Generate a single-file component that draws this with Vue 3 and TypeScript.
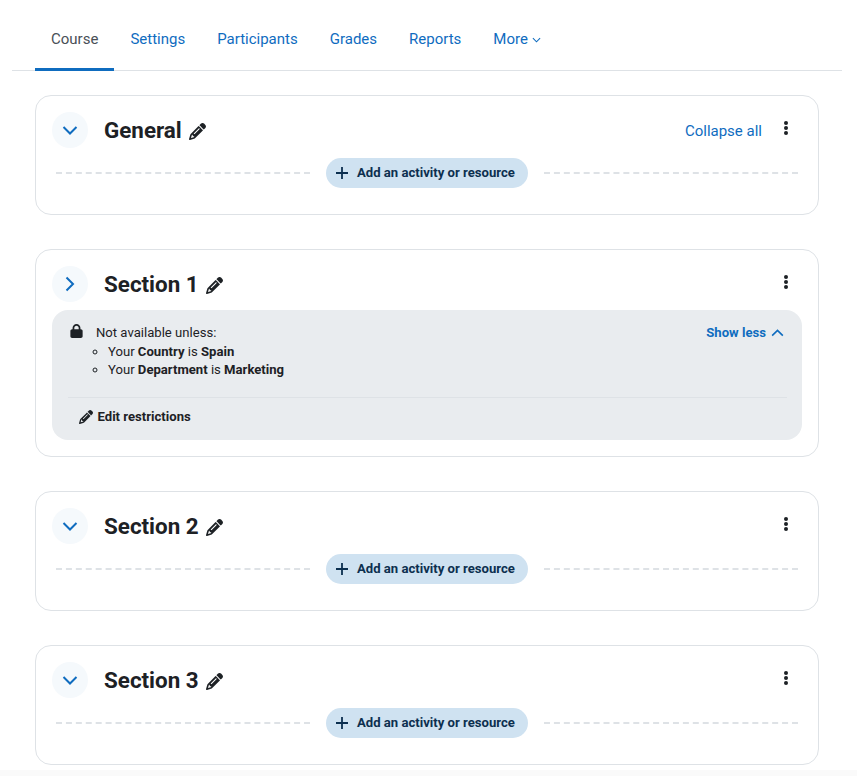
<script setup lang="ts">
const tabs: string[] = ['Settings', 'Participants', 'Grades', 'Reports']
const pencil =
  'M410.3 231l11.3-11.3-33.9-33.9-62.1-62.1L291.7 89.8l-11.3 11.3-22.6 22.6L58.6 322.9c-10.4 10.4-18 23.3-22.2 37.4L1 480.7c-2.5 8.4-.2 17.5 6.1 23.7s15.3 8.5 23.7 6.1l120.3-35.4c14.1-4.2 27-11.8 37.4-22.2L387.7 253.7 410.3 231zM160 399.4l-9.1 22.7c-4 3.1-8.5 5.4-13.3 6.9L59.4 452l23-78.1c1.4-4.9 3.8-9.4 6.9-13.3l22.7-9.1v32c0 8.8 7.2 16 16 16h32zM362.7 18.7L348.3 33.2 325.7 55.8 314.3 67.1l33.9 33.9 62.1 62.1 33.9 33.9 11.3-11.3 22.6-22.6 14.5-14.5c25-25 25-65.5 0-90.5L453.3 18.7c-25-25-65.5-25-90.5 0zm-47.4 168l-144 144c-6.2 6.2-16.4 6.2-22.6 0s-6.2-16.4 0-22.6l144-144c6.2-6.2 16.4-6.2 22.6 0s6.2 16.4 0 22.6z'
const lock =
  'M144 144v48H304V144c0-44.2-35.8-80-80-80s-80 35.8-80 80zM80 192V144C80 64.5 144.5 0 224 0s144 64.5 144 144v48h16c35.3 0 64 28.7 64 64V448c0 35.3-28.7 64-64 64H64c-35.3 0-64-28.7-64-64V256c0-35.3 28.7-64 64-64H80z'

interface Section {
  title: string
  collapseAll?: boolean
  restricted?: boolean
}
const sections: Section[] = [
  { title: 'General', collapseAll: true },
  { title: 'Section 1', restricted: true },
  { title: 'Section 2' },
  { title: 'Section 3' },
]
</script>

<template>
  <div class="page">
    <nav class="tabs">
      <a class="tab active">Course</a>
      <a v-for="t in tabs" :key="t" class="tab">{{ t }}</a>
      <a class="tab more">More<svg class="more-chevron" viewBox="0 0 10 6" width="9" height="6">
          <path d="M1 1l4 4 4-4" fill="none" stroke="currentColor" stroke-width="1.200" />
        </svg></a>
    </nav>

    <main class="sections">
      <section v-for="s in sections" :key="s.title" class="card">
        <header class="card-head">
          <span class="toggle">
            <svg v-if="s.restricted" viewBox="0 0 10 16" width="10" height="16">
              <path d="M1.500 1.500L8 8l-6.500 6.500" fill="none" stroke="currentColor" stroke-width="2" />
            </svg>
            <svg v-else viewBox="0 0 16 10" width="16" height="10">
              <path d="M1.500 2L8 8.500 14.500 2" fill="none" stroke="currentColor" stroke-width="2" />
            </svg>
          </span>
          <h2 class="title">{{ s.title }}</h2>
          <svg class="pencil" viewBox="0 0 512 512" width="17" height="17"><path :d="pencil" /></svg>
          <a v-if="s.collapseAll" class="collapse">Collapse all</a>
          <span class="dots" :class="{ 'dots-alone': !s.collapseAll }"><i></i><i></i><i></i></span>
        </header>

        <div v-if="s.restricted" class="restriction">
          <div class="r-top">
            <svg class="lock" viewBox="0 0 448 512" width="13" height="14"><path :d="lock" /></svg>
            <div class="r-text">
              <div>Not available unless:</div>
              <ul>
                <li>Your <b>Country</b> is <b>Spain</b></li>
                <li>Your <b>Department</b> is <b>Marketing</b></li>
              </ul>
            </div>
            <a class="show-less">
              Show less
              <svg viewBox="0 0 14 9" width="13" height="8">
                <path d="M1 7.500l6-6 6 6" fill="none" stroke="currentColor" stroke-width="1.800" />
              </svg>
            </a>
          </div>
          <div class="r-edit">
            <svg viewBox="0 0 512 512" width="14" height="14"><path :d="pencil" /></svg>
            <span>Edit restrictions</span>
          </div>
        </div>

        <div v-else class="add-row">
          <span class="dash"></span>
          <button class="add" type="button">
            <svg viewBox="0 0 12 12" width="12" height="12">
              <path d="M6 0v12M0 6h12" fill="none" stroke="currentColor" stroke-width="1.800" />
            </svg>
            Add an activity or resource
          </button>
          <span class="dash"></span>
        </div>
      </section>
    </main>
    <div class="strip"></div>
  </div>
</template>

<style scoped>
.page {
  width: 857px;
  height: 776px;
  overflow: hidden;
  background: #fff;
  font-family: Roboto, "Liberation Sans", sans-serif;
  color: #1d2125;
  display: flex;
  flex-direction: column;
}
.tabs {
  display: flex;
  margin: 0 15px 0 12px;
  padding-left: 23px;
  height: 71px;
  box-sizing: border-box;
  border-bottom: 1px solid #dee2e6;
}
.tab {
  height: 71px;
  box-sizing: border-box;
  padding: 10px 16px 0;
  display: flex;
  align-items: center;
  font-size: 15px;
  color: #0f6cbf;
  border-bottom: 3px solid transparent;
}
.tab.active {
  color: #495057;
  border-bottom-color: #0f6cbf;
}
.more-chevron {
  margin-left: 4px;
  margin-top: 2px;
}
.sections {
  display: flex;
  flex-direction: column;
  gap: 34px;
  margin: 24px 38px 0 35px;
}
.card {
  border: 1px solid #dee2e6;
  border-radius: 16px;
  padding: 16px;
  background: #fff;
}
.card-head {
  display: flex;
  align-items: center;
  height: 36px;
}
.toggle {
  width: 36px;
  height: 36px;
  border-radius: 50%;
  background: #f5f9fc;
  color: #0f6cbf;
  display: flex;
  align-items: center;
  justify-content: center;
  flex: none;
}
.title {
  margin: 0 0 0 16px;
  font-size: 22.4px;
  font-weight: 700;
  line-height: 36px;
}
.pencil {
  margin-left: 7px;
  margin-top: 2px;
  fill: #1d2125;
}
.collapse {
  margin: 2px 0 0 auto;
  font-size: 15px;
  color: #0f6cbf;
}
.dots {
  width: 4px;
  margin: -4px 14px 0 22px;
  display: flex;
  flex-direction: column;
  gap: 1px;
}
.dots-alone {
  margin-left: auto;
}
.dots i {
  width: 4px;
  height: 4px;
  border-radius: 50%;
  background: #1d2125;
}
.add-row {
  display: flex;
  align-items: center;
  gap: 16px;
  margin: 10px 4px;
}
.dash {
  flex: 1;
  height: 0;
  border-top: 2px dashed #dee2e6;
}
.add {
  width: 202px;
  height: 30px;
  border: 0;
  padding: 0 0 1px 10px;
  border-radius: 15px;
  background: #cfe2f1;
  color: #0c2f4f;
  font: 700 13.125px Roboto, "Liberation Sans", sans-serif;
  display: flex;
  align-items: center;
  justify-content: flex-start;
  gap: 9px;
  flex: none;
}
.restriction {
  margin-top: 8px;
  height: 130px;
  box-sizing: border-box;
  border-radius: 16px;
  background: #e9ecef;
  padding: 14px 15px 0 16px;
  font-size: 13.125px;
  line-height: 18px;
}
.r-top {
  display: flex;
  align-items: flex-start;
  height: 73px;
  border-bottom: 1px solid #dee2e6;
}
.lock {
  margin: 0 0 0 2px;
  fill: #1d2125;
  flex: none;
}
.r-text {
  margin-left: 13px;
}
.r-text ul {
  margin: 1px 0 0;
  padding-left: 12px;
  list-style: circle;
}
.show-less {
  margin: 0 3px 0 auto;
  color: #0f6cbf;
  font-weight: 700;
  display: flex;
  align-items: center;
  gap: 5px;
}
.r-edit {
  display: flex;
  align-items: center;
  gap: 4.5px;
  margin: 10px 0 0 11px;
  font-weight: 700;
}
.r-edit svg {
  fill: #1d2125;
}
.strip {
  margin-top: auto;
  height: 6px;
  background: #fafafa;
}
</style>
